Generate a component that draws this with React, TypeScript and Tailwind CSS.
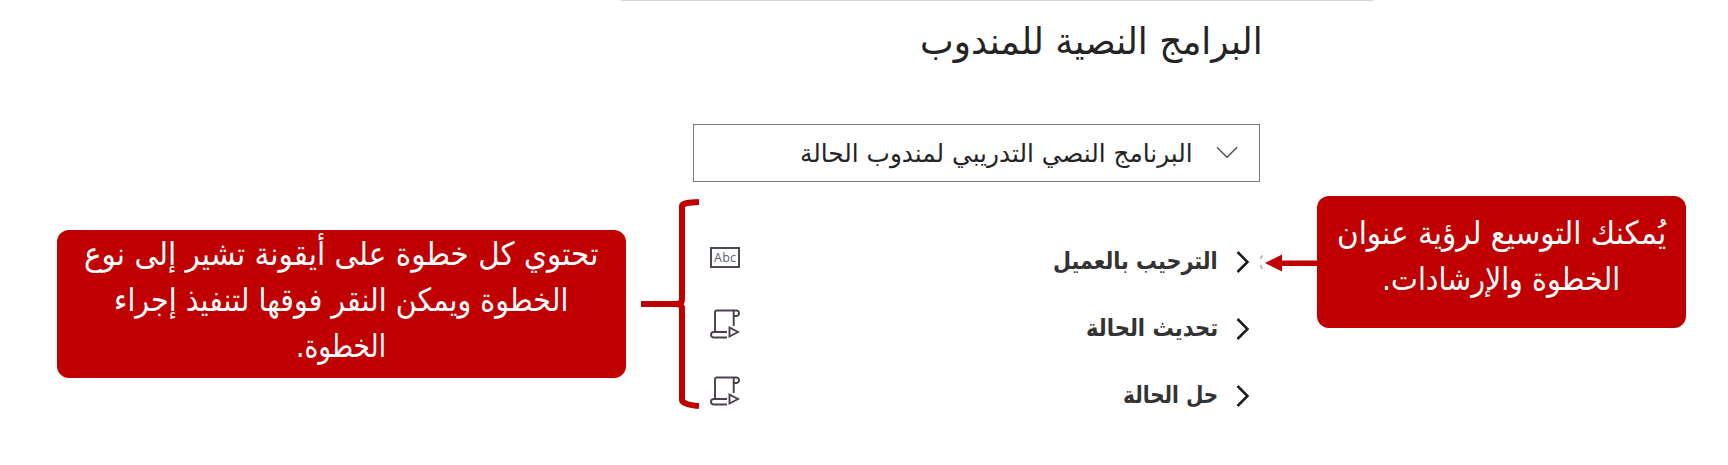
import { useLayoutEffect, useRef, useState, type ReactNode } from 'react';

type FitProps = { width: number; className: string; children: ReactNode };

/** A single line of Arabic text stretched horizontally to an exact width. */
function FitLine({ width, className, children }: FitProps) {
  const ref = useRef<HTMLSpanElement>(null);
  const [scale, setScale] = useState(1);
  useLayoutEffect(() => {
    if (ref.current) setScale(width / ref.current.offsetWidth);
  }, [width]);
  return (
    <div dir="rtl" className={`flex whitespace-nowrap ${className}`} style={{ width }}>
      <span ref={ref} className="block shrink-0 origin-right" style={{ transform: `scaleX(${scale})` }}>
        {children}
      </span>
    </div>
  );
}

function ScriptIcon() {
  return (
    <svg width="30" height="30" viewBox="0 0 30 30" fill="none" stroke="#4a3f4d" strokeWidth="1.9">
      <path d="M5 22V3.5Q5 1.5 7 1.5H26.5Q29 1.8 29 4.3T26.5 7H23.7M23.7 1.5V17" />
      <path d="M17 23H3.5Q1 23.3 1 25.8T3.5 28.5H17" />
      <path d="M19.5 18.5V27.5L28 23Z" />
    </svg>
  );
}

function AbcIcon() {
  return (
    <svg width="30" height="21" viewBox="0 0 30 21">
      <rect x="1" y="1" width="28" height="19" fill="none" stroke="#4a3f4d" strokeWidth="1.9" />
      <text x="15" y="15" textAnchor="middle" textLength="22" fontSize="12.5" fill="#606070" className="font-['Open_Sans',sans-serif]">Abc</text>
    </svg>
  );
}

function Chevron() {
  return (
    <svg width="14" height="22" viewBox="0 0 14 22" fill="none" stroke="#1b1b1f" strokeWidth="2.5">
      <path d="M1.500 1L11.500 11L1.500 21" />
    </svg>
  );
}

const steps = [
  { title: 'الترحيب بالعميل', width: 165, icon: <AbcIcon /> },
  { title: 'تحديث الحالة', width: 132, icon: <ScriptIcon /> },
  { title: 'حل الحالة', width: 95, icon: <ScriptIcon /> },
];

export default function App() {
  return (
    <div className="flex h-[465px] w-[1728px] items-start overflow-hidden bg-white text-[#242424]">
      <div className="mt-[230px] ml-[57px] flex h-[148px] w-[569px] shrink-0 flex-col items-center rounded-xl bg-[#c00000] font-['DejaVu_Sans',sans-serif] text-[32px] leading-[46px] text-white">
        <FitLine width={514} className="mt-px">تحتوي كل خطوة على أيقونة تشير إلى نوع</FitLine>
        <FitLine width={454} className="">الخطوة ويمكن النقر فوقها لتنفيذ إجراء</FitLine>
        <FitLine width={90} className="">الخطوة.</FitLine>
      </div>

      <svg className="mt-[196px] ml-[15px] shrink-0" width="58" height="216" viewBox="0 0 58 216" fill="none" stroke="#c00000" strokeWidth="6">
        <path d="M58 6Q41 6.500 41 10V103Q41 108 36 108H0M36 108Q41 108 41 113V204Q41 208.500 58 210" />
      </svg>

      <main className="-ml-[78px] flex w-[752px] shrink-0 flex-col">
        <div className="h-px w-full bg-[#d6d6d6]" />
        <div className="flex h-[123px] justify-end pt-[10px] pr-[110px]">
          <FitLine width={343} className="font-['DejaVu_Sans',sans-serif] text-[37px] leading-[62px]">البرامج النصية للمندوب</FitLine>
        </div>
        <div className="ml-[72px] flex h-[58px] w-[567px] items-center justify-end gap-[23px] border-[1.5px] border-[#7a7a7a] pr-[21px]">
          <FitLine width={393} className="mt-[2px] font-['DejaVu_Sans',sans-serif] text-[25px] leading-[50px]">البرنامج النصي التدريبي لمندوب الحالة</FitLine>
          <svg width="22" height="14" viewBox="0 0 23 14" fill="none" stroke="#505050" strokeWidth="1.5">
            <path d="M1 1L11.500 11.500L22 1" />
          </svg>
        </div>
        <div className="mt-[46px] ml-[89px] flex w-[540px] flex-col">
          {steps.map((s) => (
            <div key={s.title} className="flex h-[67px] items-center">
              <div className="pb-[9px]">{s.icon}</div>
              <div className="ml-auto flex items-center gap-[18px]">
                <FitLine width={s.width} className="pb-[2px] font-['DejaVu_Sans',sans-serif] text-[24px] font-bold leading-[48px] text-[#333333]">{s.title}</FitLine>
                <Chevron />
              </div>
            </div>
          ))}
        </div>
      </main>

      <svg className="mt-[253px] -ml-[113px] shrink-0" width="57" height="20" viewBox="0 0 57 20">
        <path d="M2.500 2.500L1 4V6M1 12V14L2.500 16" fill="none" stroke="#999" strokeWidth="1.2" />
        <path d="M5 10L22 1.500V7.500H57V13H22V18.500Z" fill="#c00000" />
      </svg>

      <div className="mt-[196px] flex h-[132px] w-[369px] shrink-0 flex-col items-center rounded-xl bg-[#c00000] font-['DejaVu_Sans',sans-serif] text-[32px] leading-[46px] text-white">
        <FitLine width={329} className="mt-[14px]">يُمكنك التوسيع لرؤية عنوان</FitLine>
        <FitLine width={238} className="">الخطوة والإرشادات.</FitLine>
      </div>
    </div>
  );
}
